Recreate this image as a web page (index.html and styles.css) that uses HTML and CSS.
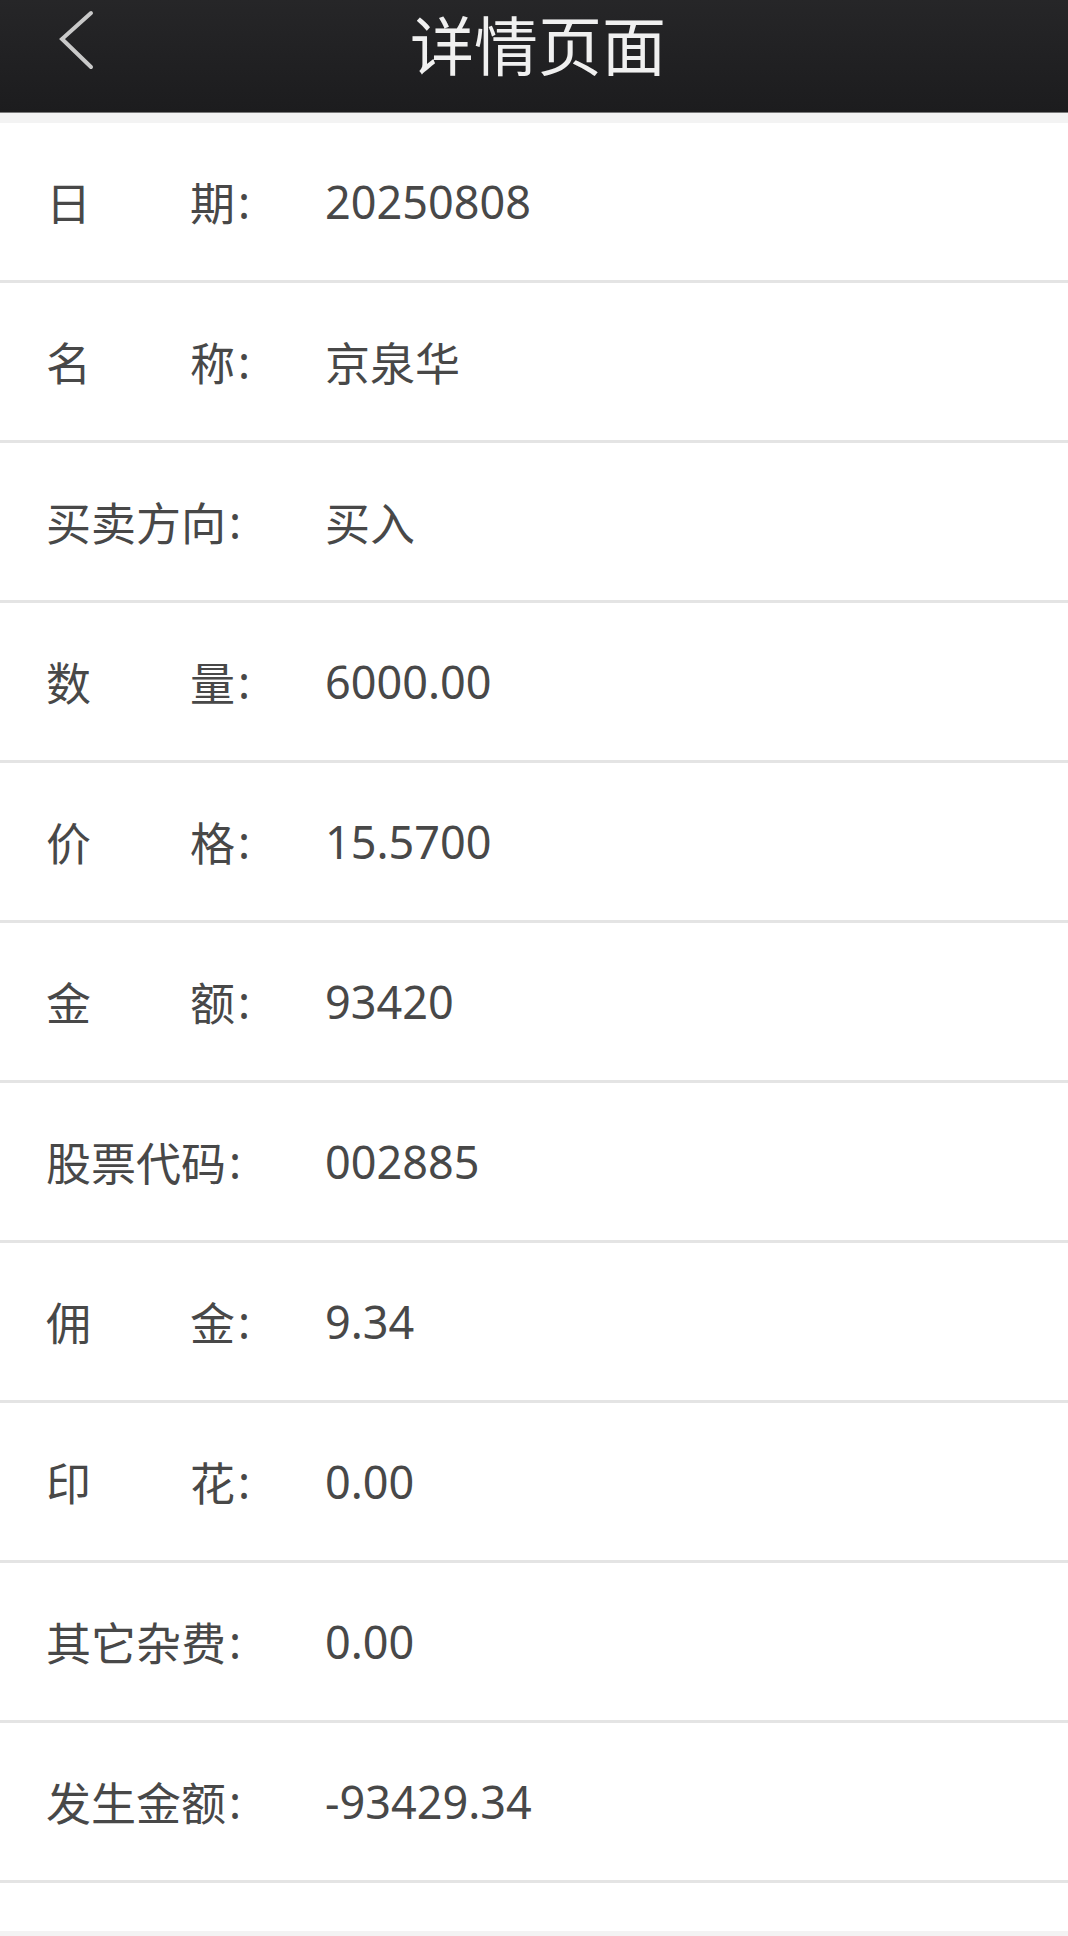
FILE: index.html
```html
<!DOCTYPE html>
<html lang="zh">
<head>
    <meta charset="UTF-8">
    <title>详情页面</title>
    <link rel="stylesheet" href="styles.css">
</head>
<body>
<div class="top">
    <span class="back">
        <svg width="44" height="72" viewBox="0 0 44 72">
            <polyline points="39,13 10,39 39,67" fill="none" stroke="#c9c9c9" stroke-width="4" stroke-linecap="round"/>
        </svg>
    </span>
    <h1>详情页面</h1>
</div>
<ul class="info">
    <li><div class="name"><span class="k wide">日期</span><span class="c">:</span></div><span class="v">20250808</span></li>
    <li><div class="name"><span class="k wide">名称</span><span class="c">:</span></div><span class="v">京泉华</span></li>
    <li><div class="name"><span class="k">买卖方向</span><span class="c">:</span></div><span class="v">买入</span></li>
    <li><div class="name"><span class="k wide">数量</span><span class="c">:</span></div><span class="v">6000.00</span></li>
    <li><div class="name"><span class="k wide">价格</span><span class="c">:</span></div><span class="v">15.5700</span></li>
    <li><div class="name"><span class="k wide">金额</span><span class="c">:</span></div><span class="v">93420</span></li>
    <li><div class="name"><span class="k">股票代码</span><span class="c">:</span></div><span class="v">002885</span></li>
    <li><div class="name"><span class="k wide">佣金</span><span class="c">:</span></div><span class="v">9.34</span></li>
    <li><div class="name"><span class="k wide">印花</span><span class="c">:</span></div><span class="v">0.00</span></li>
    <li><div class="name"><span class="k">其它杂费</span><span class="c">:</span></div><span class="v">0.00</span></li>
    <li><div class="name"><span class="k">发生金额</span><span class="c">:</span></div><span class="v">-93429.34</span></li>
    <li class="empty"></li>
</ul>
</body>
</html>
```

FILE: styles.css
```css
* {
    list-style: none;
    margin: 0;
    padding: 0;
}

body {
    background: #f3f3f3;
    font-family: "Noto Sans CJK SC", "Noto Sans", sans-serif;
    color: #484848;
}

.top {
    height: 112px;
    border-bottom: 1px solid #7a7a7a;
    background: linear-gradient(#262628, #1c1c1e);
    display: flex;
    justify-content: center;
    position: relative;
}

.top h1 {
    font-size: 64px;
    font-weight: normal;
    color: #f0f0f0;
    line-height: 84px;
    margin-left: 8px;
}

.top .back {
    position: absolute;
    left: 52px;
    top: 0;
}

.info {
    margin-top: 10px;
}

.info li {
    height: 157px;
    background: #fff;
    border-bottom: 3px solid #e4e4e4;
    display: flex;
    align-items: center;
    padding-left: 46px;
    font-size: 45px;
}

.info li.empty {
    height: 48px;
    border-bottom: 0;
}

.info .name {
    width: 279px;
    display: flex;
    align-items: center;
    white-space: nowrap;
}

.info .k.wide {
    display: inline-block;
    width: 189px;
    text-align: justify;
    text-align-last: justify;
}

.info .c {
    font-family: "Noto Sans", sans-serif;
    margin-left: 3px;
}

.info .v {
    font-family: "Noto Sans", "Noto Sans CJK SC", sans-serif;
}
```
